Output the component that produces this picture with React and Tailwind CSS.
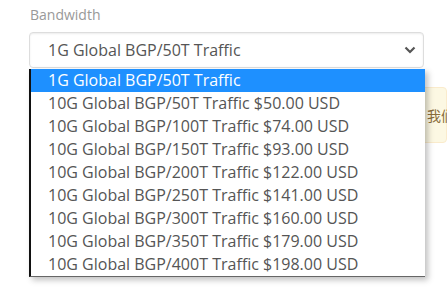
const options = [
  '1G Global BGP/50T Traffic',
  '10G Global BGP/50T Traffic $50.00 USD',
  '10G Global BGP/100T Traffic $74.00 USD',
  '10G Global BGP/150T Traffic $93.00 USD',
  '10G Global BGP/200T Traffic $122.00 USD',
  '10G Global BGP/250T Traffic $141.00 USD',
  '10G Global BGP/300T Traffic $160.00 USD',
  '10G Global BGP/350T Traffic $179.00 USD',
  '10G Global BGP/400T Traffic $198.00 USD',
];

const Chevron = () => (
  <svg width="12" height="8" viewBox="0 0 12 8" className="text-[#555]">
    <path d="M1.5 1.5 L6 6 L10.5 1.5" fill="none" stroke="currentColor" strokeWidth="2.2" />
  </svg>
);

export default function App() {
  return (
    <div className="relative w-[447px] h-[287px] bg-white overflow-hidden font-['Open_Sans',sans-serif]">
      <div className="pl-[30px] pt-[5px]">
        <div className="text-[14px] leading-[20px] text-[#999]">Bandwidth</div>
        <div className="mt-[7px] ml-[-1px] w-[395px] h-[36px] flex items-center justify-between pl-[18px] pr-[7px] border border-[#ddd] rounded-[4px] shadow-[inset_0_1px_2px_rgba(0,0,0,0.08)] text-[16px] text-[#555]">
          <span>1G Global BGP/50T Traffic</span>
          <Chevron />
        </div>
        <div className="mt-[19px] ml-[-1px] h-[56px] bg-[#fcf8e3] border border-[#faebcc] rounded-[4px] flex items-center pl-[397px] text-[14px] text-[#8a6d3b] whitespace-nowrap font-['Noto_Sans_CJK_SC',sans-serif]">
          我们提供的服务
        </div>
      </div>

      <ul className="absolute left-[29px] top-[69px] w-[396px] bg-white border-l-2 border-l-[#111] border-b border-b-[#666] shadow-[3px_3px_6px_rgba(0,0,0,0.25)]">
        {options.map((o, i) => (
          <li
            key={o}
            className={`h-[23px] pl-[17px] text-[16px] leading-[23px] whitespace-nowrap ${i === 0 ? 'bg-[#1e90ff] text-white' : 'text-[#555]'}`}
          >
            {o}
          </li>
        ))}
      </ul>
    </div>
  );
}
